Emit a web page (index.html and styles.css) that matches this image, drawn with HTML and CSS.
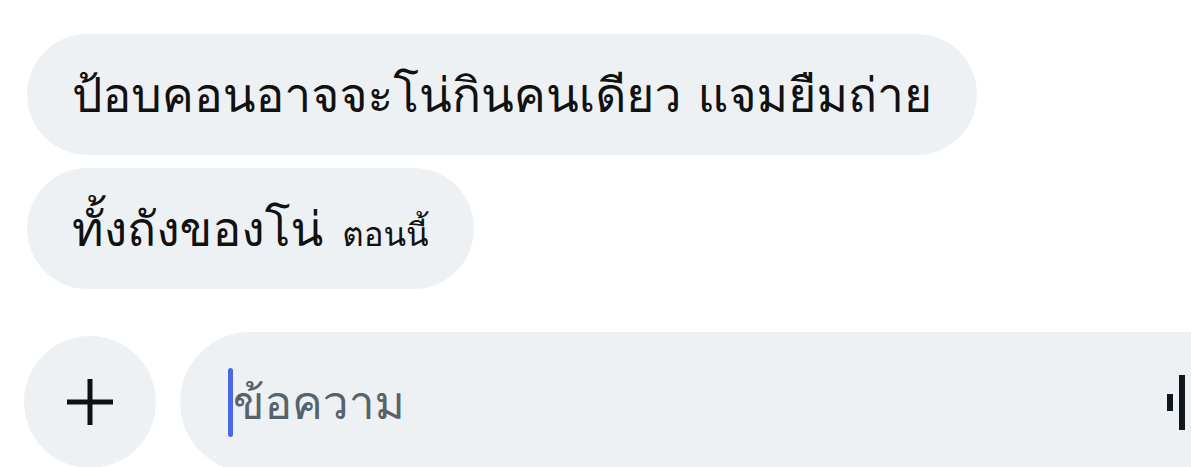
FILE: index.html
```html
<!DOCTYPE html>
<html lang="th">
<head>
<meta charset="utf-8">
<link rel="stylesheet" href="styles.css">
</head>
<body>
<div class="chat">
  <div class="messages">
    <div class="bubble">ป้อบคอนอาจจะโน่กินคนเดียว แจมยืมถ่าย</div>
    <div class="bubble">ทั้งถังของโน่ <span class="time">ตอนนี้</span></div>
  </div>
  <div class="composer">
    <div class="plus">
      <svg width="50" height="50" viewBox="0 0 50 50"><path d="M25 2v46M2 25h46" stroke="#111" stroke-width="5" fill="none"/></svg>
    </div>
    <div class="input">
      <span class="caret"></span>
      <span class="placeholder">ข้อความ</span>
      <span class="wave">
        <span class="bar b1"></span>
        <span class="bar b2"></span>
        <span class="bar b3"></span>
      </span>
    </div>
  </div>
</div>
</body>
</html>
```
FILE: styles.css
```css
html, body {
  margin: 0;
  padding: 0;
  background: #ffffff;
  overflow: hidden;
}
body {
  width: 1191px;
  height: 467px;
  font-family: "Loma", "Noto Sans Thai Looped", "Noto Sans Thai", sans-serif;
}
.chat {
  display: flex;
  flex-direction: column;
  overflow: hidden;
  height: 467px;
}
.messages {
  display: flex;
  flex-direction: column;
  align-items: flex-start;
  gap: 13px;
  padding: 34px 0 0 27px;
}
.bubble {
  background: #eef1f3;
  height: 121px;
  border-radius: 61px;
  padding: 0 45px;
  display: flex;
  align-items: center;
  font-size: 48px;
  color: #111;
  white-space: nowrap;
  box-sizing: border-box;
}
.time {
  font-size: 33px;
  margin-left: 19px;
  margin-top: 12px;
}
.composer {
  display: flex;
  align-items: flex-start;
  gap: 24px;
  padding: 43px 0 0 24px;
  overflow: hidden;
}
.plus {
  width: 132px;
  height: 132px;
  flex: none;
  border-radius: 50%;
  background: #eef1f3;
  display: flex;
  align-items: center;
  justify-content: center;
  margin-top: 4px;
}
.input {
  flex: none;
  width: 1100px;
  height: 140px;
  background: #eef1f3;
  border-radius: 70px;
  display: flex;
  align-items: center;
  padding-left: 48px;
  box-sizing: border-box;
}
.caret {
  width: 5px;
  height: 69px;
  background: #4a67e6;
  border-radius: 3px;
}
.placeholder {
  font-size: 46px;
  color: #56636d;
}
.wave {
  margin-left: auto;
  display: flex;
  align-items: center;
  gap: 6px;
  margin-right: 83px;
}
.bar {
  width: 6px;
  background: #111820;
}
.b1 { height: 17px; }
.b2 { height: 55px; }
.b3 { height: 40px; }
```
